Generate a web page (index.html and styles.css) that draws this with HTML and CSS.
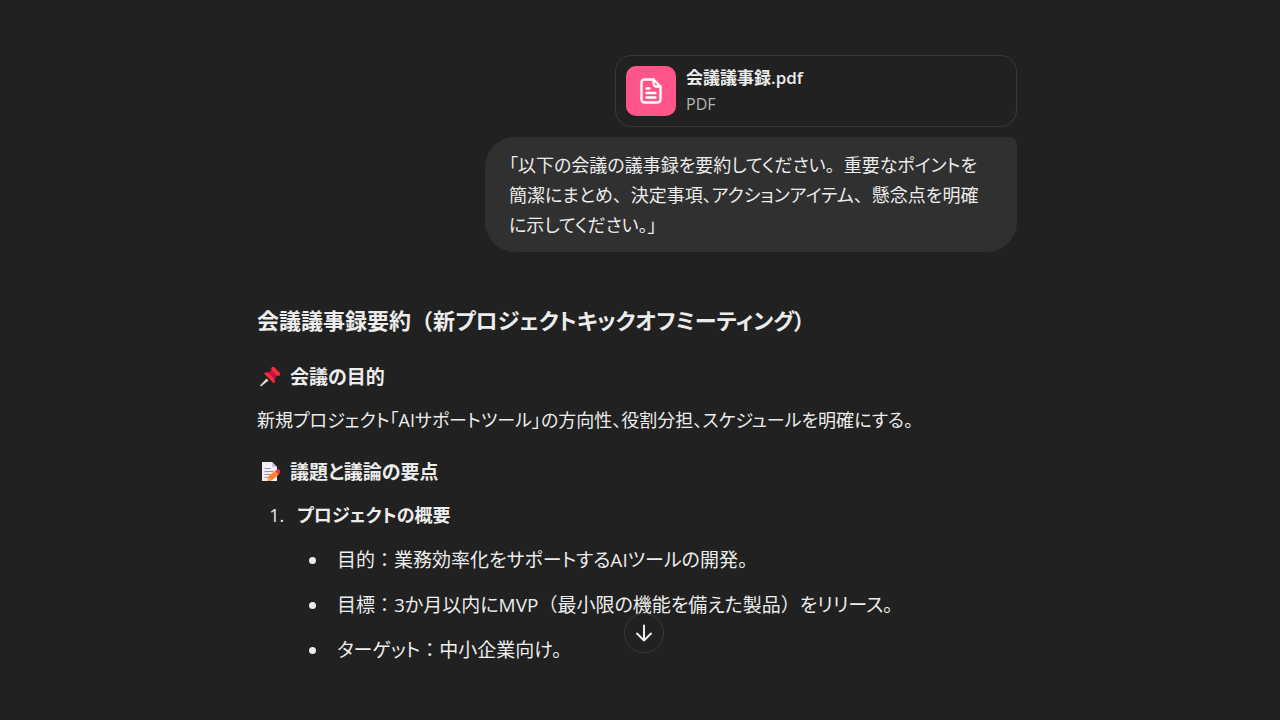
FILE: index.html
```html
<!DOCTYPE html>
<html lang="ja">
<head>
<meta charset="utf-8">
<meta name="viewport" content="width=device-width, initial-scale=1">
<title>会議議事録要約</title>
<link rel="stylesheet" href="styles.css">
</head>
<body>
<main class="thread">
  <section class="user-turn">
    <a class="file-card" href="#">
      <span class="file-icon">
        <svg width="28" height="28" viewBox="0 0 28 28" fill="none" stroke="#fff" stroke-width="2.300" stroke-linejoin="round" stroke-linecap="round" aria-hidden="true">
          <path d="M16.500 2.500H7.500a3 3 0 0 0-3 3v17a3 3 0 0 0 3 3h13a3 3 0 0 0 3-3V9.500z"/>
          <path d="M16.500 2.500v4a3 3 0 0 0 3 3h4"/>
          <path d="M9.500 11.500h3M9.500 16h9M9.500 20.500h9"/>
        </svg>
      </span>
      <span class="file-text">
        <span class="file-name">会議議事録.pdf</span>
        <span class="file-type">PDF</span>
      </span>
    </a>
    <p class="bubble">「以下の会議の議事録を要約してください<span class="full">。</span>重要なポイントを<br>簡潔にまとめ<span class="full">、</span>決定事項、アクションアイテム<span class="full">、</span>懸念点を明確<br>に示してください。」</p>
  </section>

  <article class="answer">
    <h2 class="title">会議議事録要約<span class="full">（</span>新プロジェクトキックオフミーティング）</h2>

    <h3 class="heading">
      <svg class="emoji" width="24" height="24" viewBox="0 0 24 24" role="img" aria-label="ピン">
        <path d="M2 20.500L8.500 13.500l2 2L3 21.500z" fill="#ddd"/>
        <path d="M9.500 8l5-3.500 5 5.500-4 5.500z" fill="#c3114f"/>
        <path d="M13.500 2.500c1-1 2-1 3 0l5 5c1 1 1 2 0 3-1 .8-2 .5-3-.5l-4.500-4.500c-1-1-1.200-2-.5-3zM6 8.500c2-1.500 4-1 5.500.5l4 4c1.500 1.500 2 3.500.5 5.500z" fill="#fa2b35"/>
      </svg>
      会議の目的
    </h3>
    <p class="text">新規プロジェクト「AIサポートツール」の方向性、役割分担、スケジュールを明確にする。</p>

    <h3 class="heading">
      <svg class="emoji" width="24" height="24" viewBox="0 0 24 24" role="img" aria-label="メモ">
        <path d="M4 2h10l5 5v14H4z" fill="#f3eef8"/>
        <path d="M14 2v5h5z" fill="#cdc3d8"/>
        <path d="M6.500 8.500h6M6.500 11.500h9M6.500 14.500h6M6.500 17.500h3" stroke="#998ea5" stroke-width="1"/>
        <path d="M10 16.500l7.500-6 3.500 4-7.500 6-4 .5z" fill="#ff822d"/>
        <path d="M9 20.500l1-3.500 3 3z" fill="#e9b47e"/>
        <path d="M17.500 11c1.500-2 3.200-2.200 4.300-.8s.6 2.700-1.300 4z" fill="#f8315f"/>
      </svg>
      議題と議論の要点
    </h3>
    <ol class="topics">
      <li><strong>プロジェクトの概要</strong>
        <ul class="points">
          <li>目的<span class="full">：</span>業務効率化をサポートするAIツールの開発。</li>
          <li>目標<span class="full">：</span>3か月以内にMVP<span class="full">（</span>最小限の機能を備えた製品<span class="full">）</span>をリリース。</li>
          <li>ターゲット<span class="full">：</span>中小企業向け。</li>
        </ul>
      </li>
    </ol>
  </article>
</main>
<button class="scroll-down" type="button" aria-label="一番下へ">
  <svg width="20" height="20" viewBox="0 0 20 20" fill="none" stroke="#ececec" stroke-width="2" stroke-linecap="round" stroke-linejoin="round" aria-hidden="true"><path d="M10 2.500v15M3 10.500l7 7 7-7"/></svg>
</button>
</body>
</html>
```
FILE: styles.css
```css
* { box-sizing: border-box; }

body {
  margin: 0;
  background: #212121;
  color: #ececec;
  font-family: "Open Sans", "Noto Sans CJK JP", sans-serif;
  font-size: 18px;
  line-height: 30px;
  font-feature-settings: "palt";
}

h2, h3, p, ol, ul { margin: 0; padding: 0; }

.thread {
  width: 100%;
  max-width: 766px;
  margin: 0 auto;
  padding: 55px 6px 0 0;
}

.user-turn {
  display: flex;
  flex-direction: column;
  align-items: flex-end;
  gap: 10px;
}

.file-card {
  display: flex;
  align-items: center;
  gap: 10px;
  width: 100%;
  max-width: 402px;
  padding: 9px 10px;
  border: 1px solid #383838;
  border-radius: 16px;
  color: inherit;
  text-decoration: none;
}

.file-icon {
  display: flex;
  align-items: center;
  justify-content: center;
  width: 50px;
  height: 50px;
  border-radius: 10px;
  background: #ff5588;
}

.file-text {
  display: flex;
  flex-direction: column;
  font-size: 17px;
  line-height: 26px;
}

.file-name { font-weight: 600; }

.file-type {
  color: #b4b4b4;
  font-size: 16px;
}

.bubble {
  width: 100%;
  max-width: 532px;
  padding: 13px 24px 12px;
  border-radius: 30px 8px 30px 30px;
  background: #303030;
}

.answer { padding-top: 52px; }

.title {
  font-size: 22px;
  line-height: 32px;
  font-weight: 600;
}

.full { font-feature-settings: normal; }

.heading {
  display: flex;
  align-items: center;
  gap: 8px;
  margin-top: 22px;
  font-size: 19px;
  font-weight: 600;
}

.title + .heading { margin-top: 26px; }

.text, .topics { margin-top: 13px; }

.emoji { margin-left: 1px; }

.topics { padding-left: 32px; }

.topics li { padding-left: 8px; }

.topics strong { font-weight: 600; }

.points {
  display: grid;
  gap: 15px;
  margin-top: 15px;
  padding-left: 32px;
  font-size: 19px;
  list-style: disc;
}

.scroll-down {
  position: fixed;
  bottom: 67px;
  left: calc(50% + 4px);
  transform: translateX(-50%);
  display: flex;
  align-items: center;
  justify-content: center;
  width: 40px;
  height: 40px;
  padding: 0;
  border: 1px solid #383838;
  border-radius: 50%;
  background: #212121;
}
```
